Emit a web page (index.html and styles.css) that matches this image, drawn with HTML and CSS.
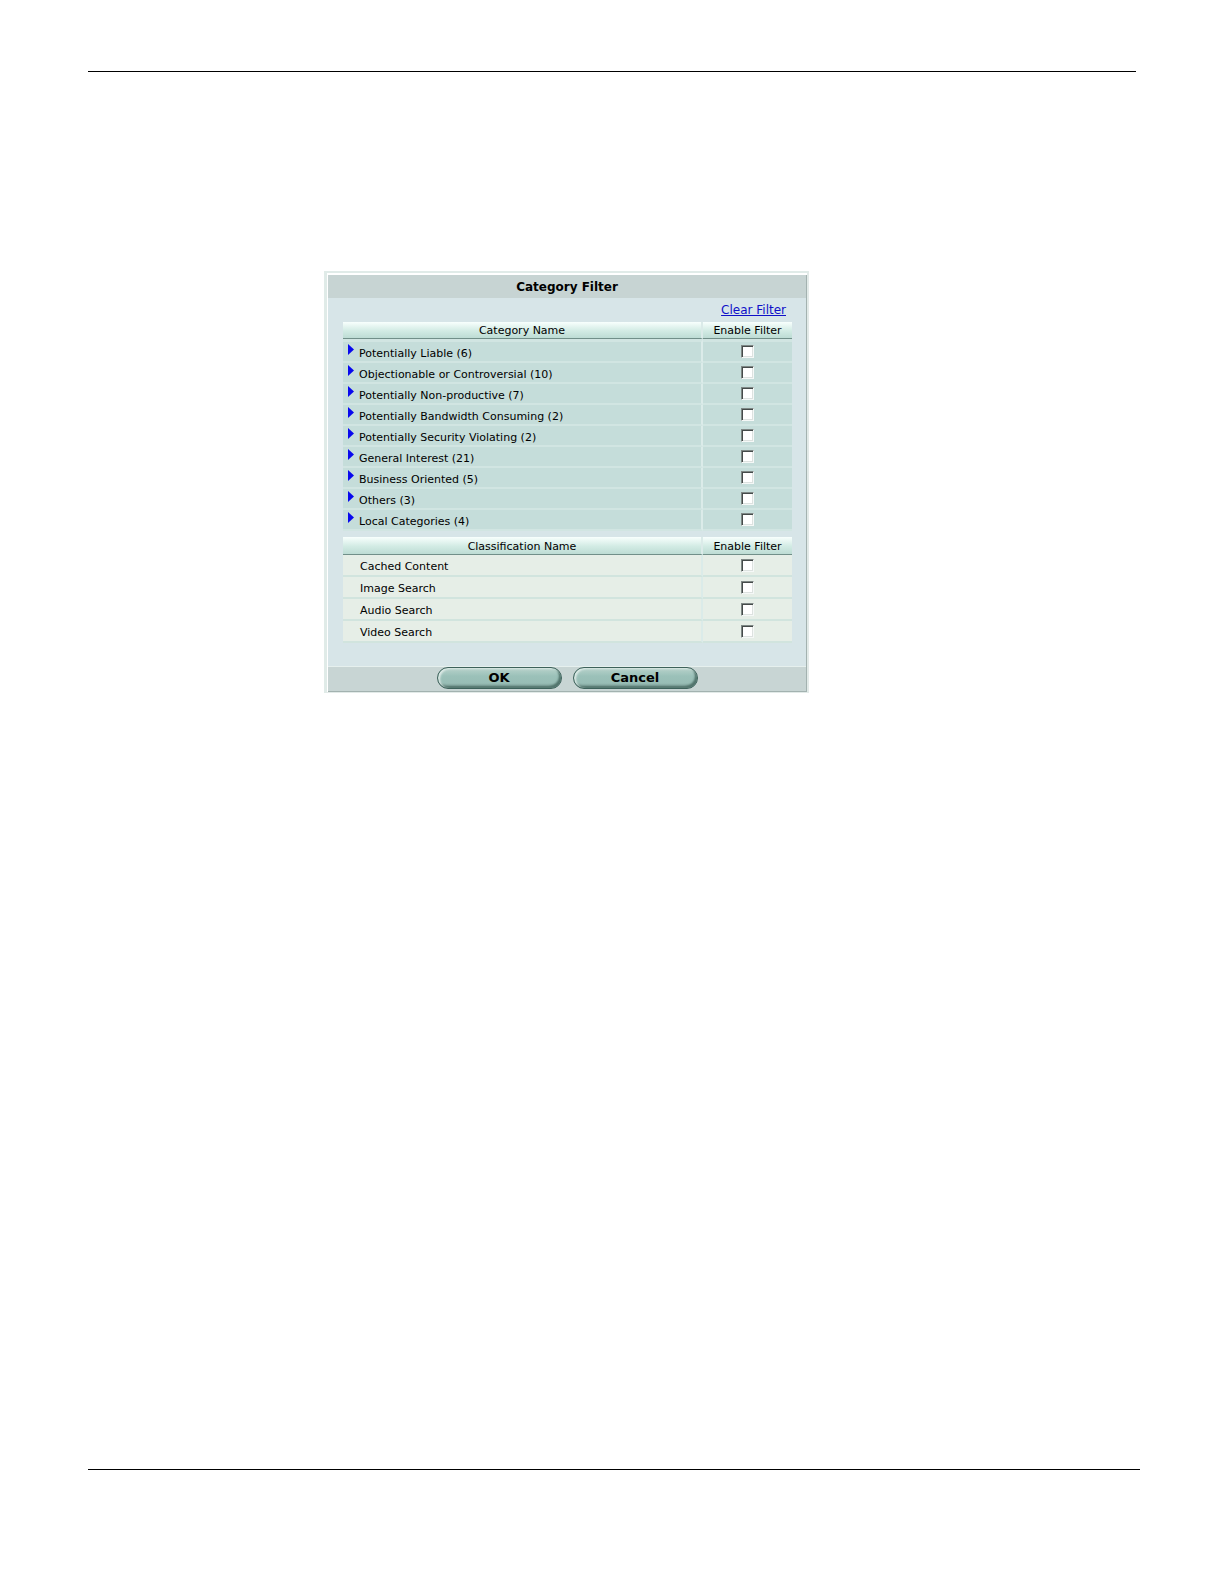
FILE: index.html
```html
<!DOCTYPE html>
<html lang="en">
<head>
  <meta charset="utf-8">
  <title>Category Filter</title>
  <link rel="stylesheet" href="styles.css">
</head>
<body>
  <hr class="rule rule-top">
  <main>
    <form class="panel">
      <h1>Category Filter</h1>
      <div class="content">
        <a class="clear" href="#">Clear Filter</a>
        <table class="categories">
          <thead>
            <tr><th>Category Name</th><th class="enable">Enable Filter</th></tr>
          </thead>
          <tbody>
            <tr>
              <td><div class="name"><button type="button" class="expand" aria-label="Expand"><svg width="6" height="11" viewBox="0 0 6 11"><path d="M0 0L6 5.5L0 11Z"/></svg></button><label for="cat1">Potentially Liable (6)</label></div></td>
              <td><input type="checkbox" id="cat1"></td>
            </tr>
            <tr>
              <td><div class="name"><button type="button" class="expand" aria-label="Expand"><svg width="6" height="11" viewBox="0 0 6 11"><path d="M0 0L6 5.5L0 11Z"/></svg></button><label for="cat2">Objectionable or Controversial (10)</label></div></td>
              <td><input type="checkbox" id="cat2"></td>
            </tr>
            <tr>
              <td><div class="name"><button type="button" class="expand" aria-label="Expand"><svg width="6" height="11" viewBox="0 0 6 11"><path d="M0 0L6 5.5L0 11Z"/></svg></button><label for="cat3">Potentially Non-productive (7)</label></div></td>
              <td><input type="checkbox" id="cat3"></td>
            </tr>
            <tr>
              <td><div class="name"><button type="button" class="expand" aria-label="Expand"><svg width="6" height="11" viewBox="0 0 6 11"><path d="M0 0L6 5.5L0 11Z"/></svg></button><label for="cat4">Potentially Bandwidth Consuming (2)</label></div></td>
              <td><input type="checkbox" id="cat4"></td>
            </tr>
            <tr>
              <td><div class="name"><button type="button" class="expand" aria-label="Expand"><svg width="6" height="11" viewBox="0 0 6 11"><path d="M0 0L6 5.5L0 11Z"/></svg></button><label for="cat5">Potentially Security Violating (2)</label></div></td>
              <td><input type="checkbox" id="cat5"></td>
            </tr>
            <tr>
              <td><div class="name"><button type="button" class="expand" aria-label="Expand"><svg width="6" height="11" viewBox="0 0 6 11"><path d="M0 0L6 5.5L0 11Z"/></svg></button><label for="cat6">General Interest (21)</label></div></td>
              <td><input type="checkbox" id="cat6"></td>
            </tr>
            <tr>
              <td><div class="name"><button type="button" class="expand" aria-label="Expand"><svg width="6" height="11" viewBox="0 0 6 11"><path d="M0 0L6 5.5L0 11Z"/></svg></button><label for="cat7">Business Oriented (5)</label></div></td>
              <td><input type="checkbox" id="cat7"></td>
            </tr>
            <tr>
              <td><div class="name"><button type="button" class="expand" aria-label="Expand"><svg width="6" height="11" viewBox="0 0 6 11"><path d="M0 0L6 5.5L0 11Z"/></svg></button><label for="cat8">Others (3)</label></div></td>
              <td><input type="checkbox" id="cat8"></td>
            </tr>
            <tr>
              <td><div class="name"><button type="button" class="expand" aria-label="Expand"><svg width="6" height="11" viewBox="0 0 6 11"><path d="M0 0L6 5.5L0 11Z"/></svg></button><label for="cat9">Local Categories (4)</label></div></td>
              <td><input type="checkbox" id="cat9"></td>
            </tr>
          </tbody>
        </table>
        <table class="classes">
          <thead>
            <tr><th>Classification Name</th><th class="enable">Enable Filter</th></tr>
          </thead>
          <tbody>
            <tr>
              <td><div class="name"><label for="class1">Cached Content</label></div></td>
              <td><input type="checkbox" id="class1"></td>
            </tr>
            <tr>
              <td><div class="name"><label for="class2">Image Search</label></div></td>
              <td><input type="checkbox" id="class2"></td>
            </tr>
            <tr>
              <td><div class="name"><label for="class3">Audio Search</label></div></td>
              <td><input type="checkbox" id="class3"></td>
            </tr>
            <tr>
              <td><div class="name"><label for="class4">Video Search</label></div></td>
              <td><input type="checkbox" id="class4"></td>
            </tr>
          </tbody>
        </table>
      </div>
      <div class="actions">
        <button type="submit" class="btn">OK</button>
        <button type="button" class="btn">Cancel</button>
      </div>
    </form>
  </main>
  <hr class="rule rule-bottom">
</body>
</html>
```
FILE: styles.css
```css
* {
  box-sizing: border-box;
}
body {
  margin: 0;
  min-height: 100vh;
  padding: 71px 84px 114px 88px;
  display: flex;
  flex-direction: column;
  background: #fff;
  color: #000;
  font-family: Verdana, "DejaVu Sans", sans-serif;
  font-size: 11px;
}
.rule {
  width: 100%;
  height: 1px;
  margin: 0;
  border: none;
  background: #000;
}
.rule-top {
  width: auto;
  margin-right: 4px;
}
main {
  flex: 1;
  padding: 199px 0 0 236px;
}
.panel {
  max-width: 485px;
  border: 3px solid #e0ebe8;
  border-top-width: 2px;
  border-right: 2px solid #e2eae8;
  border-bottom: 1px solid #e2eae8;
  background: #d7e5e8;
  box-shadow: inset 1px 2px #fff, inset -1px -1px #a3b2b0;
  padding: 2px 1px 1px;
}
h1 {
  margin: 0;
  padding-top: 1px;
  background: #c7d4d3;
  font-size: 12px;
  line-height: 22px;
  text-align: center;
}
.content {
  padding: 4px 14px 23px 15px;
}
.clear {
  display: block;
  width: fit-content;
  margin: 0 6px 4px auto;
  color: #1010c8;
  font-size: 12px;
  line-height: 16px;
}
table {
  width: 100%;
  table-layout: fixed;
  border-collapse: separate;
  border-spacing: 0;
}
th, td {
  padding: 0;
}
th:first-child, td:first-child {
  border-right: 2px solid #dbebe9;
  background-clip: padding-box;
}
th {
  height: 17px;
  padding-top: 2px;
  font-weight: normal;
  line-height: 14px;
  background: linear-gradient(#f8fffd, #d2ebe4 55%, #bddcd4);
  border-bottom: 1px solid #718f89;
}
.enable {
  width: 89px;
}
.name {
  display: flex;
}
.categories {
  margin-bottom: 6px;
}
.categories td {
  height: 21px;
  background: #c5ddda;
  border-bottom: 2px solid #d1e5e2;
}
.categories tr:first-child td {
  height: 24px;
  border-top: 3px solid #d1e5e2;
}
.categories .name {
  padding-left: 5px;
  line-height: 13px;
}
.categories label {
  padding-top: 4px;
}
.expand {
  display: block;
  width: 6px;
  height: 11px;
  margin: 1px 5px 0 0;
  padding: 0;
  border: none;
  background: none;
}
.expand svg {
  display: block;
  fill: #0808ee;
}
.classes th {
  height: 18px;
}
.classes td {
  height: 22px;
  background: #e6eee7;
  border-bottom: 2px solid #d1e4de;
}
.classes .name {
  padding: 4px 0 0 17px;
  line-height: 16px;
}
input[type="checkbox"] {
  appearance: none;
  display: block;
  width: 13px;
  height: 13px;
  margin: 0 auto;
  background: #fff;
  border: 1px solid;
  border-color: #7e8785 #f5f8f7 #f5f8f7 #7e8785;
  box-shadow: inset 1px 1px #454b4a, inset -1px -1px #dde2e0;
}
.actions {
  display: flex;
  justify-content: center;
  gap: 11px;
  padding-bottom: 2px;
  background: #c8d5d4;
  border-top: 1px solid #e6f0ee;
}
.btn {
  width: 125px;
  height: 22px;
  padding: 0;
  border: 1px solid #3e625b;
  border-radius: 11px;
  background: linear-gradient(#b7d2cb, #9bc1b9 40%, #98bdb5 75%, #789a93);
  box-shadow: inset 2px 1px 2px #dceae6, inset -2px -2px 2px #50736b;
  color: #000;
  font-family: inherit;
  font-size: 13px;
  font-weight: bold;
  line-height: 20px;
}
```
